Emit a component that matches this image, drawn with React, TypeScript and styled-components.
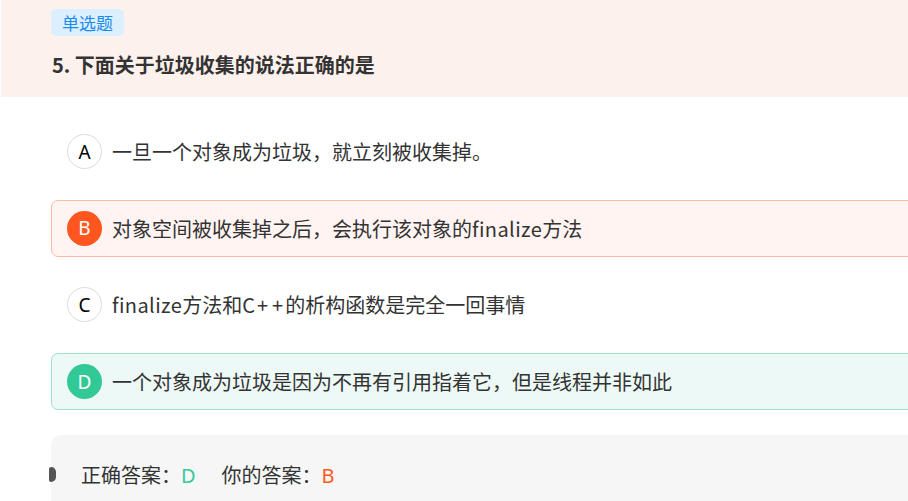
import React from "react";
import styled, { createGlobalStyle } from "styled-components";

const Global = createGlobalStyle`
  html, body { margin: 0; padding: 0; background: #fff; overflow: hidden; }
  body { font-family: "Noto Sans CJK SC", "Noto Sans", sans-serif; color: #333; }
`;

const Page = styled.div`
  width: 1100px;
  height: 501px;
  overflow: hidden;
`;

const Header = styled.header`
  margin-left: 1px;
  height: 97px;
  box-sizing: border-box;
  padding: 9px 0 0 50px;
  background: #fdf1ed;
`;

const Tag = styled.span`
  display: inline-flex;
  align-items: center;
  height: 27px;
  padding: 0 11px;
  border-radius: 5px;
  background: #dcefff;
  color: #1d8cf0;
  font-size: 17px;
  line-height: 1;
`;

const Title = styled.h1`
  margin: 13px 0 0 1px;
  font-size: 20px;
  font-weight: 700;
  line-height: 32px;
  color: #333;
`;

const Options = styled.div`
  display: flex;
  flex-direction: column;
  gap: 19.7px;
  padding: 26px 0 0 51px;
`;

type Tone = "none" | "wrong" | "right";

const Option = styled.div<{ $tone: Tone }>`
  display: flex;
  align-items: center;
  gap: 10px;
  height: 57px;
  box-sizing: border-box;
  padding-left: 15px;
  border-radius: 7px;
  border: 1px solid
    ${(p) => (p.$tone === "wrong" ? "#fbbaa6" : p.$tone === "right" ? "#a2e1c8" : "transparent")};
  background: ${(p) => (p.$tone === "wrong" ? "#fff4f1" : p.$tone === "right" ? "#edf9f6" : "transparent")};
`;

const Letter = styled.span<{ $tone: Tone }>`
  flex: none;
  width: 35px;
  height: 35px;
  box-sizing: border-box;
  border-radius: 50%;
  display: flex;
  align-items: center;
  justify-content: center;
  font-family: "Noto Sans", "Open Sans", sans-serif;
  font-size: 19px;
  border: 1px solid ${(p) => (p.$tone === "none" ? "#dcdcdc" : "transparent")};
  background: ${(p) => (p.$tone === "wrong" ? "#ff5620" : p.$tone === "right" ? "#33c996" : "#fff")};
  color: ${(p) => (p.$tone === "none" ? "#000" : "#fff")};
`;

const OptionText = styled.span`
  font-size: 20px;
  color: #333;
  white-space: nowrap;
`;

const Latin = styled.span`
  letter-spacing: 0.4px;
`;

const Plus = styled.span`
  padding: 0 2px;
`;

const AnswerBox = styled.div`
  position: relative;
  margin: 25px 0 0 51px;
  height: 120px;
  box-sizing: border-box;
  padding: 25px 0 0 30px;
  border-radius: 10px;
  background: #f6f6f6;
  display: flex;
  align-items: flex-start;
  gap: 26px;
`;

const Marker = styled.span`
  position: absolute;
  left: -2px;
  top: 32px;
  width: 7px;
  height: 15px;
  border-radius: 3px 7px 7px 3px;
  background: #555;
`;

const AnswerItem = styled.span`
  font-size: 20px;
  line-height: 30px;
  color: #333;
`;

const AnswerValue = styled.span<{ $color: string }>`
  color: ${(p) => p.$color};
  font-family: "Noto Sans", sans-serif;
`;

const options: { key: string; text: React.ReactNode; tone: Tone }[] = [
  { key: "A", text: "一旦一个对象成为垃圾，就立刻被收集掉。", tone: "none" },
  {
    key: "B",
    text: (
      <>
        对象空间被收集掉之后，会执行该对象的<Latin>finalize</Latin>方法
      </>
    ),
    tone: "wrong",
  },
  {
    key: "C",
    text: (
      <>
        <Latin>finalize</Latin>方法和C<Plus>+</Plus><Plus>+</Plus>的析构函数是完全一回事情
      </>
    ),
    tone: "none",
  },
  { key: "D", text: "一个对象成为垃圾是因为不再有引用指着它，但是线程并非如此", tone: "right" },
];

export default function App() {
  return (
    <Page>
      <Global />
      <Header>
        <Tag>单选题</Tag>
        <Title>5. 下面关于垃圾收集的说法正确的是</Title>
      </Header>
      <Options>
        {options.map((o) => (
          <Option key={o.key} $tone={o.tone}>
            <Letter $tone={o.tone}>{o.key}</Letter>
            <OptionText>{o.text}</OptionText>
          </Option>
        ))}
      </Options>
      <AnswerBox>
        <Marker />
        <AnswerItem>
          正确答案：<AnswerValue $color="#33c996">D</AnswerValue>
        </AnswerItem>
        <AnswerItem>
          你的答案：<AnswerValue $color="#ff5620">B</AnswerValue>
        </AnswerItem>
      </AnswerBox>
    </Page>
  );
}
